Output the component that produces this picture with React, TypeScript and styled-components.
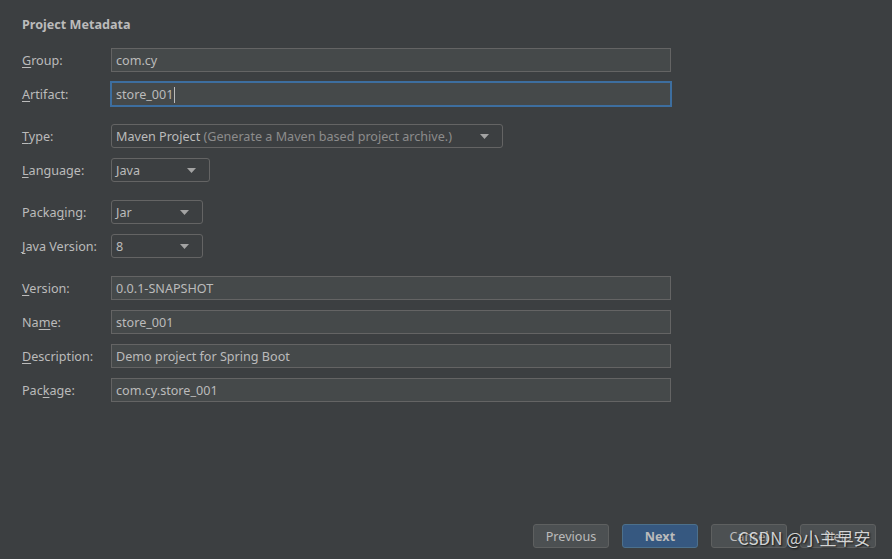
import React from "react";
import styled, { createGlobalStyle } from "styled-components";

const GlobalStyle = createGlobalStyle`
  html, body {
    margin: 0;
    padding: 0;
    background: #3c3f41;
  }
  body {
    font-family: "Noto Sans", "Noto Sans CJK SC", sans-serif;
    font-size: 12.6px;
    color: #bbbbbb;
  }
`;

const Page = styled.div`
  position: relative;
  width: 892px;
  height: 559px;
  box-sizing: border-box;
  padding: 14px 0 0 22px;
  display: flex;
  flex-direction: column;
  background: #3c3f41;
  overflow: hidden;
`;

const Title = styled.div`
  font-weight: bold;
  font-size: 12.6px;
  line-height: 22px;
  height: 22px;
  color: #bbbbbb;
  margin-bottom: 12px;
`;

const Section = styled.div`
  display: flex;
  flex-direction: column;
  gap: 10px;
  margin-bottom: 18px;
`;

const Row = styled.div`
  display: grid;
  grid-template-columns: 89px 1fr;
  grid-template-rows: 24px;
  align-items: center;
  height: 24px;
`;

const Label = styled.label`
  box-sizing: border-box;
  height: 24px;
  padding-top: 2px;
  line-height: 22px;
  white-space: nowrap;
  u {
    text-decoration: underline;
    text-underline-offset: 2px;
  }
`;

const TextField = styled.div<{ $focused?: boolean }>`
  box-sizing: border-box;
  width: 560px;
  height: 24px;
  background: #45494a;
  border: 1px solid #646464;
  padding: 1px 4px 0;
  line-height: 22px;
  display: flex;
  align-items: center;
  white-space: nowrap;
  ${(p) =>
    p.$focused &&
    `
    margin-left: -1px;
    width: 562px;
    height: 26px;
    padding: 1px 3px 0 4px;
    border: 2px solid #3d6e9f;
  `}
`;

const Caret = styled.span`
  display: inline-block;
  width: 1px;
  height: 16px;
  background: #bbbbbb;
  margin-left: 1px;
`;

const Combo = styled.div<{ $width: number }>`
  box-sizing: border-box;
  width: ${(p) => p.$width}px;
  height: 24px;
  border: 1px solid #646464;
  border-radius: 3px;
  padding: 1px 13px 0 4px;
  display: flex;
  align-items: center;
  justify-content: space-between;
  white-space: nowrap;
`;

const Hint = styled.span`
  color: #8c8c8c;
`;

const Arrow = () => (
  <svg width="9" height="5" viewBox="0 0 9 5">
    <path d="M0 0h9L4.5 5z" fill="#a3a3a3" />
  </svg>
);

const Footer = styled.div`
  position: absolute;
  right: 16px;
  bottom: 11px;
  display: flex;
  gap: 13px;
`;

const Button = styled.button<{ $primary?: boolean }>`
  box-sizing: border-box;
  width: 76px;
  height: 24px;
  border-radius: 3px;
  border: 1px solid ${(p) => (p.$primary ? "#4c708c" : "#5e6060")};
  background: ${(p) => (p.$primary ? "#365880" : "#4c5052")};
  color: #bbbbbb;
  font-family: inherit;
  font-size: 12.6px;
  font-weight: ${(p) => (p.$primary ? "bold" : "normal")};
  padding: 0;
`;

const Watermark = styled.div`
  position: absolute;
  left: 738px;
  top: 526px;
  font-family: "Noto Sans CJK SC", sans-serif;
  font-size: 17px;
  line-height: 24px;
  color: rgba(240, 240, 240, 0.85);
  text-shadow: 1px 1px 2px rgba(0, 0, 0, 0.8);
  pointer-events: none;
`;

const L = ({ pre = "", u, post }: { pre?: string; u: string; post: string }) => (
  <Label>
    {pre}
    <u>{u}</u>
    {post}
  </Label>
);

export default function App() {
  return (
    <>
      <GlobalStyle />
      <Page>
        <Title>Project Metadata</Title>
        <Section>
          <Row>
            <L u="G" post="roup:" />
            <TextField>com.cy</TextField>
          </Row>
          <Row>
            <L u="A" post="rtifact:" />
            <TextField $focused>
              store_001
              <Caret />
            </TextField>
          </Row>
        </Section>
        <Section>
          <Row>
            <L u="T" post="ype:" />
            <Combo $width={392}>
              <span>
                Maven Project <Hint>(Generate a Maven based project archive.)</Hint>
              </span>
              <Arrow />
            </Combo>
          </Row>
          <Row>
            <L u="L" post="anguage:" />
            <Combo $width={99}>
              <span>Java</span>
              <Arrow />
            </Combo>
          </Row>
        </Section>
        <Section>
          <Row>
            <L pre="Packa" u="g" post="ing:" />
            <Combo $width={92}>
              <span>Jar</span>
              <Arrow />
            </Combo>
          </Row>
          <Row>
            <L u="J" post="ava Version:" />
            <Combo $width={92}>
              <span>8</span>
              <Arrow />
            </Combo>
          </Row>
        </Section>
        <Section>
          <Row>
            <L u="V" post="ersion:" />
            <TextField>0.0.1-SNAPSHOT</TextField>
          </Row>
          <Row>
            <L pre="Na" u="m" post="e:" />
            <TextField>store_001</TextField>
          </Row>
          <Row>
            <L u="D" post="escription:" />
            <TextField>Demo project for Spring Boot</TextField>
          </Row>
          <Row>
            <L pre="Pac" u="k" post="age:" />
            <TextField>com.cy.store_001</TextField>
          </Row>
        </Section>
        <Footer>
          <Button>Previous</Button>
          <Button $primary>Next</Button>
          <Button>Cancel</Button>
          <Button>Help</Button>
        </Footer>
        <Watermark>CSDN @小主早安</Watermark>
      </Page>
    </>
  );
}
